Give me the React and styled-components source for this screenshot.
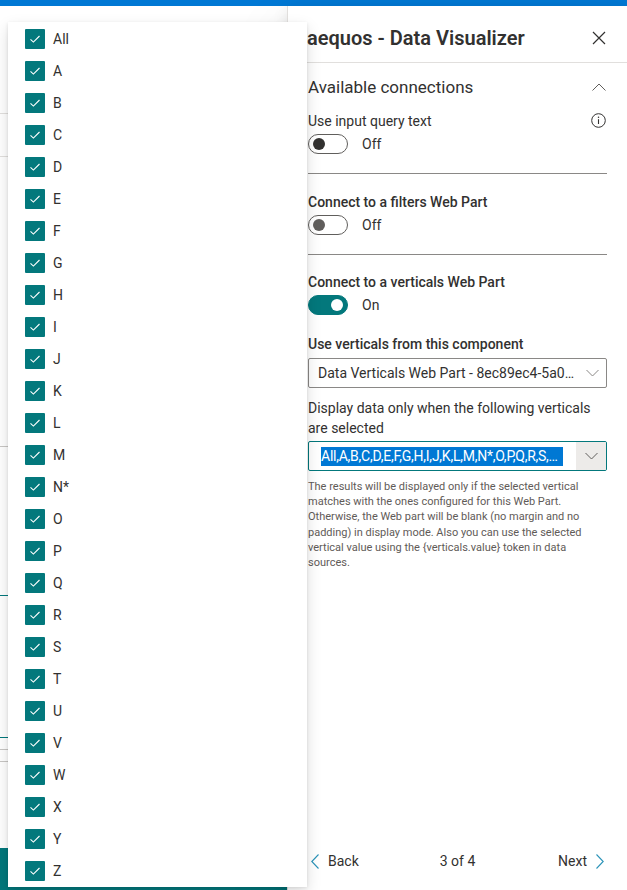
import React from "react";
import styled, { createGlobalStyle } from "styled-components";

const Global = createGlobalStyle`
  html, body { margin: 0; padding: 0; background: #fff; }
  body { font-family: "Segoe UI", Roboto, "Liberation Sans", sans-serif; color: #323130; -webkit-font-smoothing: antialiased; }
  * { box-sizing: border-box; }
`;

const Root = styled.div`
  position: relative;
  width: 627px;
  height: 890px;
  overflow: hidden;
  display: flex;
  flex-direction: column;
`;

const TopBar = styled.div`
  height: 6px;
  background: #0078d4;
  flex: none;
`;

const Main = styled.div`
  flex: 1;
  display: grid;
  grid-template-columns: 287px minmax(0, 1fr);
  min-height: 0;
`;

const Page = styled.div`
  display: flex;
  flex-direction: column;
  background: #fff;
`;

const PageBlock = styled.div`
  height: ${(p) => p.$h}px;
  flex: none;
  border-bottom: 1px solid ${(p) => p.$line};
`;

const PageButton = styled.div`
  margin-top: auto;
  height: 42px;
  background: #03787c;
`;

const Panel = styled.aside`
  position: relative;
  min-width: 0;
  display: flex;
  flex-direction: column;
  background: #fff;
  border-left: 1px solid #e1dfdd;
  box-shadow: 0 25.6px 57.6px 0 rgba(0,0,0,.12), 0 4.8px 14.4px 0 rgba(0,0,0,.1);
`;

const Header = styled.div`
  height: 57px;
  margin-left: 19px;
  padding: 8px 21px 0 0;
  display: flex;
  align-items: center;
  justify-content: space-between;
  border-bottom: 1px solid #e1dfdd;
`;

const Title = styled.h1`
  margin: 0;
  font-size: 20px;
  font-weight: 600;
  color: #323130;
  white-space: nowrap;
`;

const IconButton = styled.span`
  display: inline-flex;
  width: 14px;
  height: 14px;
  align-items: center;
  justify-content: center;
  margin-right: ${(p) => p.$mr || 0}px;
`;

const Body = styled.div`
  padding: 0 20px 0 20px;
  min-width: 0;
  display: flex;
  flex-direction: column;
`;

const GroupHeader = styled.div`
  margin-top: 4px;
  height: 40px;
  display: flex;
  align-items: center;
  justify-content: space-between;
  font-size: 17px;
  color: #323130;
`;

const LabelRow = styled.div`
  height: 26px;
  margin-top: ${(p) => p.$mt || 0}px;
  padding-top: 1px;
  display: flex;
  align-items: center;
  justify-content: space-between;
  font-size: 14px;
  font-weight: ${(p) => (p.$strong ? 500 : 400)};
  color: #323130;
  padding-right: 1px;
`;

const ToggleRow = styled.div`
  margin-top: 1px;
  height: 20px;
  display: flex;
  align-items: center;
  gap: 14px;
  font-size: 14px;
  color: #323130;
`;

const Track = styled.span`
  position: relative;
  width: 40px;
  height: 20px;
  border-radius: 10px;
  border: 1px solid ${(p) => (p.$on ? "#03787c" : "#605e5c")};
  background: ${(p) => (p.$on ? "#03787c" : "#fff")};
  display: flex;
  align-items: center;
  justify-content: ${(p) => (p.$on ? "flex-end" : "flex-start")};
  padding: 0 4px;
`;

const Knob = styled.span`
  width: 12px;
  height: 12px;
  border-radius: 50%;
  background: ${(p) => p.$c};
`;

const Divider = styled.div`
  margin-top: 19px;
  height: 1px;
  background: #6b6a69;
  border-bottom: 0.5px solid #8a8886;
`;

const Select = styled.div`
  margin-top: ${(p) => p.$mt || 0}px;
  height: 30px;
  border: 1px solid ${(p) => (p.$focus ? "#03787c" : "#8a8886")};
  border-radius: 2px;
  display: flex;
  align-items: center;
  font-size: 14px;
  color: #323130;
  overflow: hidden;
  min-width: 0;
`;

const SelectText = styled.span`
  flex: 1;
  min-width: 0;
  padding: 0 0 0 ${(p) => p.$pl}px;
  white-space: nowrap;
  overflow: hidden;
  text-overflow: ellipsis;
`;

const Highlight = styled.span`
  display: inline-block;
  max-width: 100%;
  background: #0078d4;
  color: #fff;
  line-height: 19px;
  letter-spacing: -0.25px;
  white-space: nowrap;
  overflow: hidden;
  text-overflow: ellipsis;
  vertical-align: middle;
`;

const Caret = styled.span`
  width: ${(p) => p.$w}px;
  align-self: stretch;
  flex: none;
  display: flex;
  align-items: center;
  justify-content: center;
  background: ${(p) => (p.$shade ? "#edebe9" : "transparent")};
  margin-left: ${(p) => p.$ml}px;
`;

const Para = styled.p`
  margin: ${(p) => p.$m};
  font-size: ${(p) => p.$fs}px;
  line-height: ${(p) => p.$lh}px;
  color: ${(p) => p.$c};
  padding-right: ${(p) => p.$pr || 0}px;
`;

const Footer = styled.div`
  margin-top: auto;
  height: 58px;
  padding: 0 20px;
  display: grid;
  grid-template-columns: 1fr auto 1fr;
  align-items: center;
  font-size: 14px;
  color: #323130;
`;

const NavBtn = styled.span`
  display: flex;
  align-items: center;
  gap: 9px;
  justify-self: ${(p) => p.$side};
  padding: ${(p) => (p.$side === "start" ? "0 0 0 3px" : "0 3px 0 0")};
`;

const Callout = styled.div`
  position: absolute;
  left: 8px;
  top: 22px;
  width: 299px;
  height: 865px;
  background: #fff;
  padding-top: 1px;
  box-shadow: 0 6.4px 14.4px 0 rgba(0,0,0,.132), 0 1.2px 3.6px 0 rgba(0,0,0,.108);
  display: flex;
  flex-direction: column;
  z-index: 5;
`;

const Option = styled.div`
  height: 32px;
  flex: none;
  display: flex;
  align-items: center;
  gap: 8px;
  padding-left: 17px;
  font-size: 14px;
  color: #323130;
`;

const Box = styled.span`
  width: 20px;
  height: 20px;
  background: #03787c;
  border-radius: 1px;
  display: flex;
  align-items: center;
  justify-content: center;
`;

const Check = () => (
  <svg width="14" height="14" viewBox="0 0 14 14" fill="none">
    <path d="M2.5 7.3 L5.4 10.1 L11.5 4" stroke="#fff" strokeWidth="1.1" />
  </svg>
);

const CloseIcon = () => (
  <svg width="14" height="14" viewBox="0 0 14 14" fill="none">
    <path d="M1 1 L13 13 M13 1 L1 13" stroke="#323130" strokeWidth="1.2" />
  </svg>
);

const ChevronUp = () => (
  <svg width="14" height="8" viewBox="0 0 14 8" fill="none">
    <path d="M0.5 7.5 L7 1 L13.5 7.5" stroke="#605e5c" strokeWidth="1" />
  </svg>
);

const ChevronDown = ({ c = "#605e5c" }) => (
  <svg width="13" height="8" viewBox="0 0 13 8" fill="none">
    <path d="M0.5 1 L6.5 7 L12.5 1" stroke={c} strokeWidth="1" />
  </svg>
);

const InfoIcon = () => (
  <svg width="15" height="15" viewBox="0 0 15 15" fill="none">
    <circle cx="7.5" cy="7.5" r="6.8" stroke="#323130" strokeWidth="1" />
    <path d="M7.5 6.2 V11" stroke="#323130" strokeWidth="1.1" />
    <circle cx="7.5" cy="4.3" r="0.75" fill="#323130" />
  </svg>
);

const NavChevron = ({ dir }) => (
  <svg width="8" height="15" viewBox="0 0 8 15" fill="none">
    <path d={dir === "left" ? "M7.5 0.5 L0.8 7.5 L7.5 14.5" : "M0.5 0.5 L7.2 7.5 L0.5 14.5"} stroke="#2b93b8" strokeWidth="1.1" />
  </svg>
);

const Toggle = ({ on, knob }) => (
  <ToggleRow>
    <Track $on={on}>
      <Knob $c={knob} />
    </Track>
    <span>{on ? "On" : "Off"}</span>
  </ToggleRow>
);

const options = ["All", "A", "B", "C", "D", "E", "F", "G", "H", "I", "J", "K", "L", "M", "N*", "O", "P", "Q", "R", "S", "T", "U", "V", "W", "X", "Y", "Z"];

export default function App() {
  return (
    <Root>
      <Global />
      <TopBar />
      <Main>
        <Page>
          <PageBlock $h={108} $line="#e1dfdd" />
          <PageBlock $h={43} $line="#e1dfdd" />
          <PageBlock $h={290} $line="#c8c6c4" />
          <PageBlock $h={149} $line="#03787c" />
          <PageBlock $h={142} $line="#03787c" />
          <PageBlock $h={12} $line="#c8c6c4" />
          <PageBlock $h={12} $line="#c8c6c4" />
          <PageButton />
        </Page>
        <Panel>
          <Header>
            <Title>aequos - Data Visualizer</Title>
            <IconButton><CloseIcon /></IconButton>
          </Header>
          <Body>
            <GroupHeader>
              <span>Available connections</span>
              <IconButton $mr={1}><ChevronUp /></IconButton>
            </GroupHeader>
            <LabelRow>
              <span>Use input query text</span>
              <InfoIcon />
            </LabelRow>
            <Toggle on={false} knob="#323130" />
            <Divider />
            <LabelRow $strong $mt={14}>Connect to a filters Web Part</LabelRow>
            <Toggle on={false} knob="#605e5c" />
            <Divider />
            <LabelRow $strong $mt={13}>Connect to a verticals Web Part</LabelRow>
            <Toggle on knob="#fff" />
            <LabelRow $strong $mt={15}>Use verticals from this component</LabelRow>
            <Select $mt={2}>
              <SelectText $pl={9}>Data Verticals Web Part - 8ec89ec4-5a09-4d2c-9b8e-1f0c1a3b5e77</SelectText>
              <Caret $w={28} $ml={0}><ChevronDown c="#8a8886" /></Caret>
            </Select>
            <Para $m="11px 0 0 0" $fs={14} $lh={19.5} $c="#323130" $pr={10}>
              Display data only when the following verticals are selected
            </Para>
            <Select $mt={3} $focus>
              <SelectText $pl={12}>
                <Highlight>All,A,B,C,D,E,F,G,H,I,J,K,L,M,N*,O,P,Q,R,S,T,U,V,W,X,Y,Z</Highlight>
              </SelectText>
              <Caret $w={30} $shade $ml={13}><ChevronDown /></Caret>
            </Select>
            <Para $m="8px 0 0 0" $fs={11} $lh={15.2} $c="#5f5b58" $pr={4}>
              The results will be displayed only if the selected vertical matches with the ones configured for this Web Part. Otherwise, the Web part will be blank (no margin and no padding) in display mode. Also you can use the selected vertical value using the {"{verticals.value}"} token in data sources.
            </Para>
          </Body>
          <Footer>
            <NavBtn $side="start"><NavChevron dir="left" />Back</NavBtn>
            <span>3 of 4</span>
            <NavBtn $side="end">Next<NavChevron dir="right" /></NavBtn>
          </Footer>
        </Panel>
      </Main>
      <Callout>
        {options.map((o) => (
          <Option key={o}>
            <Box><Check /></Box>
            <span>{o}</span>
          </Option>
        ))}
      </Callout>
    </Root>
  );
}
